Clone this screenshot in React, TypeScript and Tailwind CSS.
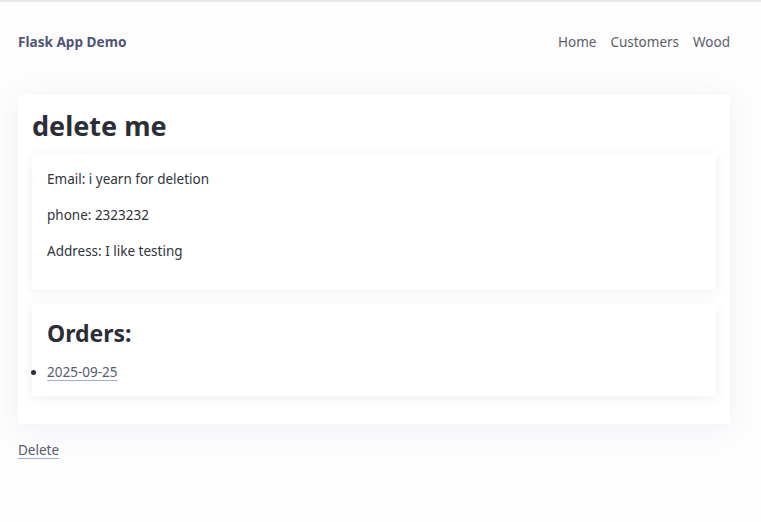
const App = () => {
  return (
    <div className="min-h-[522px] bg-[#fdfdfe] border-t-2 border-[#e9e9ec] font-['Noto_Sans',sans-serif] text-[13.5px] text-[#2f333b]">
      {/* Header */}
      <header className="mt-[30px] h-[20px] pl-[18px] pr-[31px] flex items-center justify-between">
        <div className="text-[13.6px] font-bold text-[#4d5675]">Flask App Demo</div>
        <nav className="flex gap-[14px] text-[13.5px] text-[#5b5e68]">
          <a href="#">Home</a>
          <a href="#">Customers</a>
          <a href="#">Wood</a>
        </nav>
      </header>

      {/* Main card */}
      <main className="mt-[43px] ml-[18px] mr-[31px] bg-white rounded-[4px] shadow-[0_4px_28px_rgba(40,50,110,0.07)] px-[14px] pt-[14px] pb-[28px]">
        <h1 className="text-[27px] leading-[34px] font-bold text-[#2b2e36]">delete me</h1>

        <section className="mt-[11px] bg-white rounded-[4px] shadow-[0_2px_12px_rgba(40,50,110,0.08)] px-[15px] pt-[15px] pb-[15px]">
          <p className="leading-[20px] mb-[16px]">Email: i yearn for deletion</p>
          <p className="leading-[20px] mb-[16px]">phone: 2323232</p>
          <p className="leading-[20px] mb-[14px]">Address: I like testing</p>
        </section>

        <section className="mt-[14px] bg-white rounded-[4px] shadow-[0_2px_12px_rgba(40,50,110,0.08)] px-[15px] pt-[15px] pb-[14px]">
          <h2 className="text-[23px] leading-[28px] font-bold text-[#2b2e36]">Orders:</h2>
          <ul className="mt-[15px] list-disc list-outside pl-0 marker:text-[#2b2e36]">
            <li className="leading-[20px]">
              <a href="#" className="text-[#555b6b] underline decoration-[#9bb0d0] underline-offset-[3px]">2025-09-25</a>
            </li>
          </ul>
        </section>
      </main>

      <div className="mt-[16px] px-[18px] leading-[20px]">
        <a href="#" className="text-[#555b6b] underline decoration-[#9bb0d0] underline-offset-[3px]">Delete</a>
      </div>
    </div>
  )
}

export default App
